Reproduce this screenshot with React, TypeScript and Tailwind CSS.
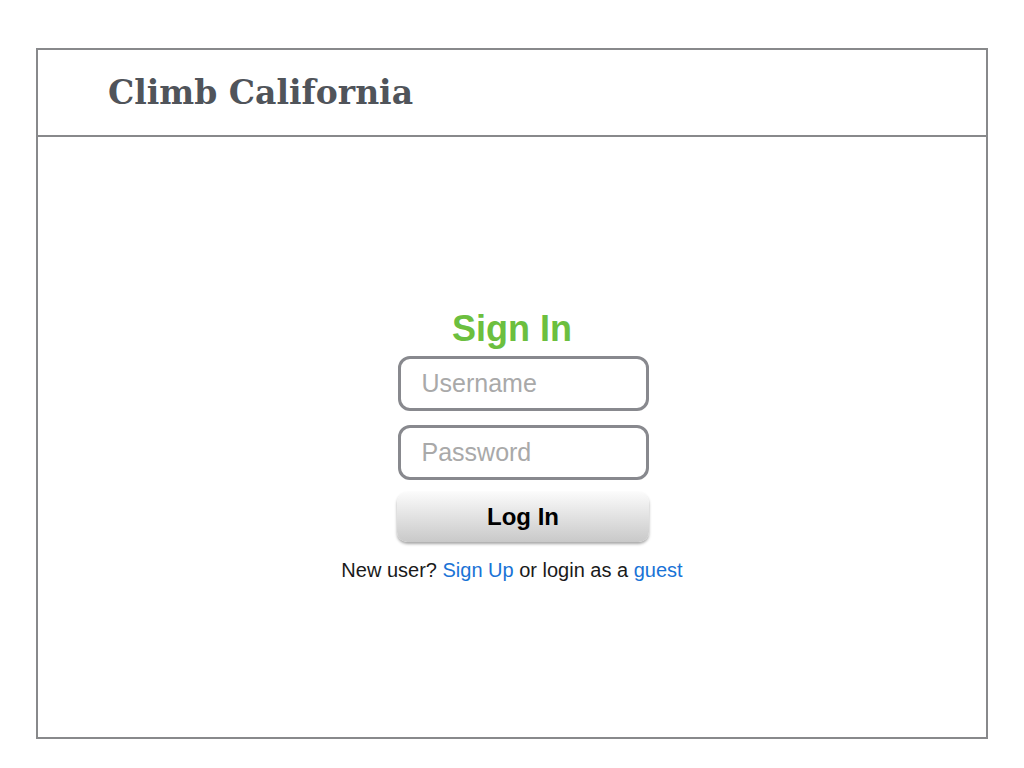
export default function App() {
  return (
    <div className="h-[768px] w-[1024px] bg-white pt-[48px] pl-[36px]">
      <div className="flex h-[691px] w-[952px] flex-col border-2 border-[#88898b]">
        <header className="flex h-[87px] items-center border-b-2 border-[#88898b] pl-[70px]">
          <h1 className="font-['DejaVu_Serif',serif] text-[33px] font-bold text-[#50545a]">
            Climb California
          </h1>
        </header>
        <main className="flex flex-1 flex-col items-center pt-[172px] font-['Liberation_Sans',Arial,sans-serif]">
          <h2 className="text-[36px] font-bold leading-[40px] text-[#6cbf3f]">Sign In</h2>
          <div className="mt-[7px] ml-[22px] flex flex-col gap-[14px]">
            <input
              type="text"
              placeholder="Username"
              className="h-[55px] w-[251px] rounded-[12px] border-[3px] border-[#88898e] px-[21px] text-[25px] font-light text-[#333] outline-none placeholder:text-[#a9a9a9]"
            />
            <input
              type="password"
              placeholder="Password"
              className="h-[55px] w-[251px] rounded-[12px] border-[3px] border-[#88898e] px-[21px] text-[25px] font-light text-[#333] outline-none placeholder:text-[#a9a9a9]"
            />
          </div>
          <button
            type="button"
            className="mt-[12px] ml-[22px] h-[50px] w-[252px] rounded-[10px] bg-gradient-to-b from-[#fbfbfb] to-[#c9c9c9] text-[24px] font-bold text-black shadow-[0_2px_3px_rgba(0,0,0,0.35)]"
          >
            Log In
          </button>
          <p className="mt-[13px] text-[20px] text-[#1a1a1a]">
            New user? <a className="text-[#1a73d6]">Sign Up</a> or login as a{" "}
            <a className="text-[#1a73d6]">guest</a>
          </p>
        </main>
      </div>
    </div>
  );
}
